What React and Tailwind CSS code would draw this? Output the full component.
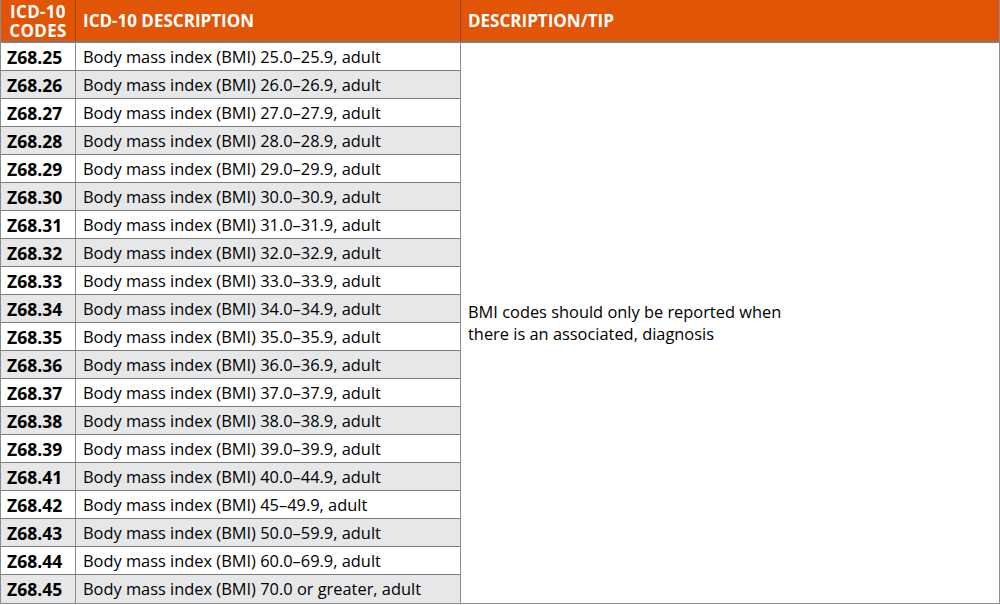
import React from 'react';

const rows = [
  ['Z68.25', 'Body mass index (BMI) 25.0–25.9, adult'],
  ['Z68.26', 'Body mass index (BMI) 26.0–26.9, adult'],
  ['Z68.27', 'Body mass index (BMI) 27.0–27.9, adult'],
  ['Z68.28', 'Body mass index (BMI) 28.0–28.9, adult'],
  ['Z68.29', 'Body mass index (BMI) 29.0–29.9, adult'],
  ['Z68.30', 'Body mass index (BMI) 30.0–30.9, adult'],
  ['Z68.31', 'Body mass index (BMI) 31.0–31.9, adult'],
  ['Z68.32', 'Body mass index (BMI) 32.0–32.9, adult'],
  ['Z68.33', 'Body mass index (BMI) 33.0–33.9, adult'],
  ['Z68.34', 'Body mass index (BMI) 34.0–34.9, adult'],
  ['Z68.35', 'Body mass index (BMI) 35.0–35.9, adult'],
  ['Z68.36', 'Body mass index (BMI) 36.0–36.9, adult'],
  ['Z68.37', 'Body mass index (BMI) 37.0–37.9, adult'],
  ['Z68.38', 'Body mass index (BMI) 38.0–38.9, adult'],
  ['Z68.39', 'Body mass index (BMI) 39.0–39.9, adult'],
  ['Z68.41', 'Body mass index (BMI) 40.0–44.9, adult'],
  ['Z68.42', 'Body mass index (BMI) 45–49.9, adult'],
  ['Z68.43', 'Body mass index (BMI) 50.0–59.9, adult'],
  ['Z68.44', 'Body mass index (BMI) 60.0–69.9, adult'],
  ['Z68.45', 'Body mass index (BMI) 70.0 or greater, adult'],
];

export default function App() {
  return (
    <div className="w-[1000px] h-[605px] bg-white text-black font-['Open_Sans','Noto_Sans',sans-serif] overflow-hidden">
      <div className="border-l border-r border-b border-[#8c8c8c] w-[1000px]">
        {/* Header */}
        <div className="flex h-[43px] bg-[#e25507] text-white font-bold text-[17px] border-b-2 border-[#7d7d7d]">
          <div className="w-[75px] shrink-0 flex flex-col items-center justify-center leading-[19px] text-[17px] tracking-[0.3px] border-r border-[#a0400a]">
            <span>ICD-10</span>
            <span>CODES</span>
          </div>
          <div className="w-[385px] shrink-0 flex items-center pl-[7px] border-r border-[#a0400a]">
            ICD-10 DESCRIPTION
          </div>
          <div className="flex-1 flex items-center pl-[7px]">DESCRIPTION/TIP</div>
        </div>

        <div className="flex">
          <div className="w-[460px] shrink-0 border-r border-[#8c8c8c]">
            {rows.map(([code, desc], i) => (
              <div
                key={code}
                className={`flex h-[28px] border-b border-[#7d7d7d] last:border-b-0 ${i % 2 ? 'bg-[#e6e7e8]' : 'bg-white'}`}
              >
                <div className="w-[75px] shrink-0 flex items-center pl-[6px] pt-[1px] font-bold text-[17.5px] border-r border-[#8c8c8c]">
                  {code}
                </div>
                <div className="flex-1 flex items-center pl-[7px] pt-[1px] text-[16.4px]">{desc}</div>
              </div>
            ))}
          </div>
          <div className="flex-1 flex items-center pl-[7px] text-[16.4px] leading-[22px]">
            <p className="w-[330px]">
              BMI codes should only be reported when there is an associated, diagnosis
            </p>
          </div>
        </div>
      </div>
    </div>
  );
}
